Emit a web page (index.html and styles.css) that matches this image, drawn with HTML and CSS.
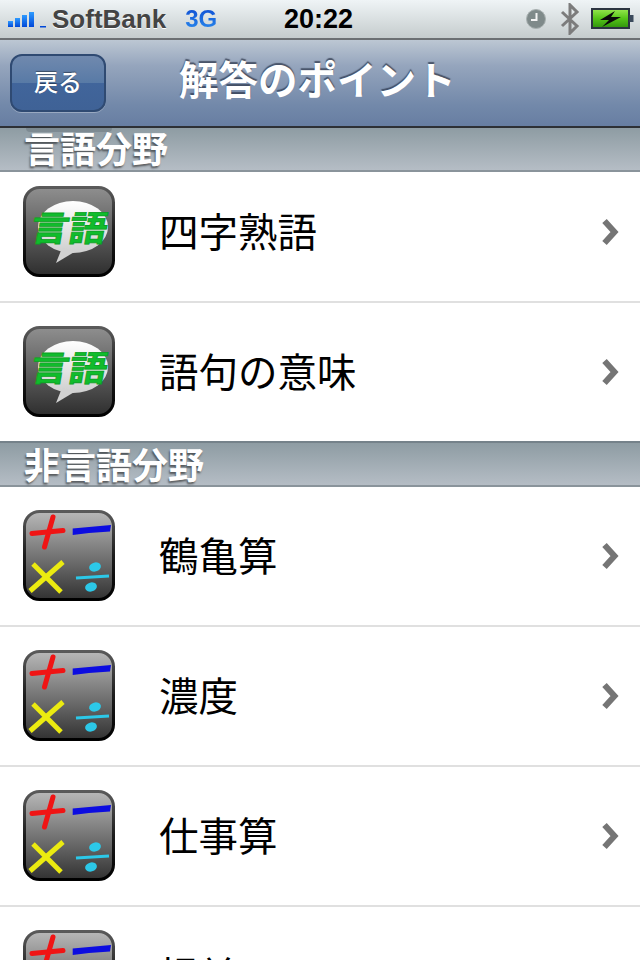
FILE: index.html
```html
<!DOCTYPE html>
<html lang="ja">
<head>
  <meta charset="UTF-8" />
  <title>解答のポイント</title>
  <link rel="stylesheet" href="styles.css">
</head>
<body>
  <svg class="defs" width="0" height="0">
    <defs>
      <linearGradient id="lang-bg" x1="0" y1="0" x2="0" y2="1">
        <stop offset="0" stop-color="#8f8f8f" />
        <stop offset="1" stop-color="#2e2e2e" />
      </linearGradient>
      <linearGradient id="math-bg" x1="0" y1="0" x2="0" y2="1">
        <stop offset="0" stop-color="#b8b8b8" />
        <stop offset="1" stop-color="#323232" />
      </linearGradient>
      <linearGradient id="icon-edge" x1="0" y1="0" x2="0" y2="1">
        <stop offset="0" stop-color="#5a5a5a" />
        <stop offset="0.5" stop-color="#1c1c1c" />
        <stop offset="1" stop-color="#000000" />
      </linearGradient>
      <linearGradient id="bubble" x1="0" y1="0" x2="0" y2="1">
        <stop offset="0" stop-color="#ffffff" />
        <stop offset="1" stop-color="#cfcfcf" />
      </linearGradient>
      <linearGradient id="charge" x1="0" y1="0" x2="0" y2="1">
        <stop offset="0" stop-color="#98e850" />
        <stop offset="0.5" stop-color="#55c418" />
        <stop offset="1" stop-color="#2f930c" />
      </linearGradient>
      <linearGradient id="signal" x1="0" y1="0" x2="0" y2="1">
        <stop offset="0" stop-color="#2e9bff" />
        <stop offset="1" stop-color="#0048d8" />
      </linearGradient>

      <symbol id="icon-lang" viewBox="0 0 92 92">
        <rect x="1.500" y="1.500" width="89" height="88" rx="15" fill="url(#lang-bg)" stroke="url(#icon-edge)" stroke-width="3" />
        <ellipse cx="50" cy="41" rx="35" ry="26" fill="url(#bubble)" />
        <path d="M39 62 L33 77 L53 65 Z" fill="#d2d2d2" />
        <text class="icon-text" transform="translate(6 54.500) skewX(-10) scale(1.06 0.97)">言語</text>
      </symbol>

      <symbol id="icon-math" viewBox="0 0 92 92">
        <rect x="1.500" y="1.500" width="89" height="88" rx="15" fill="url(#math-bg)" stroke="url(#icon-edge)" stroke-width="3" />
        <path d="M30 7 L21.500 37" stroke="#f01414" stroke-width="5" stroke-linecap="round" />
        <path d="M9 23.500 L40 20.500" stroke="#f01414" stroke-width="5" stroke-linecap="round" />
        <path d="M49.700 18.500 L88 15 L87 21.500 L66 23 L49.700 25 Z" fill="#0c0ce0" />
        <path d="M10 54 L38 82" stroke="#eceb10" stroke-width="5" />
        <path d="M40 52 L7 81" stroke="#eceb10" stroke-width="5" />
        <path d="M53 68 L86 66" stroke="#2cc8e8" stroke-width="3" />
        <ellipse cx="72" cy="57" rx="6" ry="4.500" fill="#2cc8e8" transform="rotate(-15 72 57)" />
        <ellipse cx="68" cy="77" rx="6" ry="4.500" fill="#2cc8e8" transform="rotate(-15 68 77)" />
      </symbol>

      <symbol id="chevron" viewBox="0 0 20 28">
        <path d="M4.500 3 L14.500 14 L4.500 25" fill="none" stroke="#757575" stroke-width="6" />
      </symbol>
    </defs>
  </svg>

  <div class="status-bar">
    <div class="status-left">
      <svg class="signal" width="38" height="20" viewBox="0 0 38 20">
        <rect x="0" y="12" width="5" height="6" fill="url(#signal)" />
        <rect x="7" y="9" width="5" height="9" fill="url(#signal)" />
        <rect x="14" y="6" width="5" height="12" fill="url(#signal)" />
        <rect x="21" y="3" width="5" height="15" fill="url(#signal)" />
        <rect x="32" y="17" width="6" height="1.500" fill="#0048d8" />
      </svg>
      <span class="carrier">SoftBank</span>
      <span class="network">3G</span>
    </div>
    <div class="clock">20:22</div>
    <div class="status-right">
      <svg class="alarm" width="22" height="22" viewBox="0 0 22 22">
        <circle cx="11" cy="11" r="9.500" fill="#7f8a8a" stroke="#a8b0b0" />
        <path d="M11.500 5 V12 H6" fill="none" stroke="#f4f4f4" stroke-width="2" />
      </svg>
      <svg width="20" height="32" viewBox="0 0 20 32">
        <path d="M2 9 L17 23 L10 30 V2 L17 9 L2 23" fill="none" stroke="#7c7c7c" stroke-width="3" />
      </svg>
      <svg width="43" height="22" viewBox="0 0 43 22">
        <rect x="1" y="1" width="37" height="19" fill="url(#charge)" stroke="#2b3440" stroke-width="2" />
        <rect x="38.500" y="7" width="4" height="7" fill="#3b4a5c" />
        <path d="M24 3 L9 12 H18 L11 19 L30 9 H20 Z" fill="#0a0a0a" />
      </svg>
    </div>
  </div>

  <div class="nav-bar">
    <button class="back-btn">戻る</button>
    <h1 class="nav-title">解答のポイント</h1>
  </div>

  <div class="section-head under-nav">言語分野</div>
  <ul class="list first">
    <li class="row">
      <svg class="icon"><use href="#icon-lang" /></svg>
      <span class="row-label">四字熟語</span>
      <svg class="chevron"><use href="#chevron" /></svg>
    </li>
    <li class="row">
      <svg class="icon"><use href="#icon-lang" /></svg>
      <span class="row-label">語句の意味</span>
      <svg class="chevron"><use href="#chevron" /></svg>
    </li>
  </ul>

  <div class="section-head overlap">非言語分野</div>
  <ul class="list">
    <li class="row">
      <svg class="icon"><use href="#icon-math" /></svg>
      <span class="row-label">鶴亀算</span>
      <svg class="chevron"><use href="#chevron" /></svg>
    </li>
    <li class="row">
      <svg class="icon"><use href="#icon-math" /></svg>
      <span class="row-label">濃度</span>
      <svg class="chevron"><use href="#chevron" /></svg>
    </li>
    <li class="row">
      <svg class="icon"><use href="#icon-math" /></svg>
      <span class="row-label">仕事算</span>
      <svg class="chevron"><use href="#chevron" /></svg>
    </li>
    <li class="row">
      <svg class="icon"><use href="#icon-math" /></svg>
      <span class="row-label">損益</span>
      <svg class="chevron"><use href="#chevron" /></svg>
    </li>
  </ul>
</body>
</html>
```

FILE: styles.css
```css
html,
body {
  height: 960px;
  overflow: hidden;
}

body {
  margin: 0;
  padding: 0;
  background-color: #fff;
  color: #000;
  font-family: 'Noto Sans CJK JP', 'Liberation Sans', sans-serif;
}

.defs {
  position: absolute;
}

.icon-text {
  font-family: 'Noto Sans CJK JP', sans-serif;
  font-size: 36px;
  font-weight: 700;
  fill: #10bc2c;
  stroke: #0c9e24;
  stroke-width: 0.8px;
}

/* status bar */
.status-bar {
  height: 38px;
  display: flex;
  align-items: center;
  justify-content: space-between;
  position: relative;
  background: linear-gradient(#eff4f6, #c5cccd);
  border-bottom: 2px solid #6c7073;
  font-family: 'Liberation Sans', sans-serif;
}

.status-left {
  display: flex;
  align-items: center;
  padding-left: 8px;
}

.signal {
  margin-right: 6px;
}

.carrier {
  font-size: 26px;
  font-weight: 700;
  color: #444;
  text-shadow: 0 1px 0 #fff;
  margin-right: 19px;
}

.network {
  font-size: 24px;
  font-weight: 700;
  background: linear-gradient(#0c48d0, #2c90f0);
  -webkit-background-clip: text;
  background-clip: text;
  color: transparent;
}

.clock {
  position: absolute;
  left: 284px;
  font-size: 27px;
  font-weight: 700;
  color: #000;
}

.status-right {
  display: flex;
  align-items: center;
  gap: 11px;
  padding-right: 6px;
}

.alarm {
  margin-right: 2px;
}

/* nav bar */
.nav-bar {
  height: 86px;
  display: flex;
  align-items: center;
  padding-left: 10px;
  background: linear-gradient(#bcc7d3, #95a5bd 30%, #7389aa 75%, #677ea2);
  border-bottom: 2px solid #2d3035;
}

.back-btn {
  width: 96px;
  height: 58px;
  padding: 0 0 6px;
  border: 2px solid #2f4a72;
  border-radius: 12px;
  background: linear-gradient(#7089ae, #587aa6 50%, #41659b 50%, #3f6296);
  box-shadow: 0 1px 0 rgba(255, 255, 255, 0.3);
  color: #fff;
  font-family: inherit;
  font-size: 24px;
  font-weight: 500;
  text-shadow: 0 -1px 1px rgba(0, 0, 0, 0.4);
}

.nav-title {
  margin: 0 0 10px 73px;
  font-size: 39.5px;
  font-weight: 700;
  line-height: 1;
  color: #fff;
  text-shadow: 0 -2px 1px rgba(40, 50, 70, 0.7);
}

/* section headers sit over the top of the list */
.section-head {
  height: 42px;
  position: relative;
  z-index: 1;
  padding-left: 24px;
  background: linear-gradient(#8e9ca3, #b5bdc5);
  border-bottom: 2px solid #8a949b;
  font-size: 36px;
  font-weight: 700;
  line-height: 38px;
  color: #fff;
  text-shadow: -1px 2px 2px rgba(30, 30, 30, 0.6);
}

.section-head.overlap {
  margin-top: -2px;
  border-top: 2px solid #75828a;
  line-height: 41px;
}

.under-nav::before {
  content: '';
  position: absolute;
  left: 26px;
  top: 0;
  width: 86px;
  height: 4px;
  border-radius: 0 0 6px 6px;
  background: rgba(90, 100, 110, 0.35);
}

.list {
  margin: 0;
  padding: 0;
  list-style: none;
}

.list.first {
  margin-top: -9px;
}

.row {
  height: 140px;
  box-sizing: border-box;
  display: flex;
  align-items: center;
  border-bottom: 2px solid #e0e0e0;
}

.icon {
  width: 92px;
  height: 92px;
  margin-left: 23px;
}

.row-label {
  margin: 0 0 6px 44px;
  font-size: 39.5px;
  color: #000;
}

.chevron {
  width: 20px;
  height: 28px;
  margin-left: auto;
  margin-right: 20px;
}
```
